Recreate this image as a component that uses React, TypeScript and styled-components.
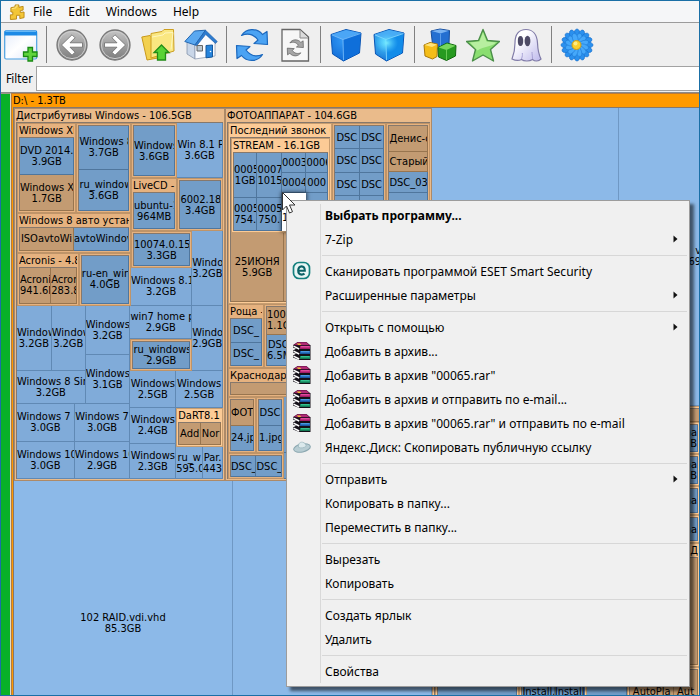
import React from "react";
import styled, { createGlobalStyle, css } from "styled-components";

const UI_FONT = '"Noto Sans", "Open Sans", sans-serif';
const MAP_FONT = '"DejaVu Sans Condensed", "Noto Sans", sans-serif';

const GlobalStyle = createGlobalStyle`
  *, *::before, *::after { box-sizing: border-box; }
  body { margin: 0; background: #efefef; color: #000; font-family: ${UI_FONT}; }
  button, input { font: inherit; color: inherit; }
`;

/* ---------- Window chrome ---------- */

const Window = styled.div`
  display: flex;
  flex-direction: column;
  height: 100vh;
  border: 1px solid #1a6fa6;
  overflow: hidden;
`;

const MenuBar = styled.nav`
  flex: none;
  display: flex;
  align-items: center;
  gap: 16px;
  height: 22px;
  padding-left: 8px;
  background: #f5f6f8;
  border-bottom: 1px solid #9b9b9b;
`;

const MenuBarIcon = styled.span`
  display: flex;
  margin-right: -8px;
`;

const MenuBarButton = styled.button`
  padding: 0;
  border: 0;
  background: none;
  font-size: 12px;
  line-height: 20px;
`;

const Toolbar = styled.div`
  flex: none;
  display: flex;
  align-items: center;
  gap: 9px;
  height: 43px;
  padding-left: 3px;
  background: #efefef;
  overflow: hidden;
`;

const ToolButton = styled.button`
  flex: none;
  display: flex;
  width: 34px;
  height: 34px;
  padding: 0;
  border: 0;
  background: none;
`;

const ToolSeparator = styled.span`
  flex: none;
  width: 1px;
  height: 37px;
  margin: 0 -1px;
  background: #808080;
`;

const FilterRow = styled.div`
  flex: none;
  display: flex;
  align-items: center;
  gap: 3px;
  height: 27px;
  padding-left: 5px;
  background: #efefef;
  border-bottom: 1px solid #8a8a8a;
`;

const FilterLabel = styled.label`
  font-family: ${MAP_FONT};
  font-size: 12px;
  line-height: 24px;
`;

const FilterInput = styled.input`
  flex: 1;
  min-width: 0;
  height: 25px;
  align-self: flex-start;
  padding: 0 4px;
  border: 1px solid #a2a2a2;
  border-right: 0;
  background: #fff;
  font-size: 12px;
  outline: none;
`;

/* ---------- Treemap ---------- */

type Tone = "sky" | "blue" | "steel" | "tan" | "picked";
type Shade = "root" | "outer" | "frame" | "pale";
type Dir = "row" | "column";

const tones: Record<Tone, [string, string]> = {
  sky: ["#8cb9e8", "#6f98c4"],
  blue: ["#80abd9", "#6089b4"],
  steel: ["#729dc8", "#4f769d"],
  tan: ["#c39b72", "#98754f"],
  picked: ["#ffffff", "#ffffff"],
};

const shades: Record<Shade, [string, string]> = {
  root: ["#ff9a00", "#b87a3c"],
  outer: ["#eabb8b", "#ad8a68"],
  frame: ["#e6b27f", "#bf9468"],
  pale: ["#fccb96", "#c79d70"],
};

type Node =
  | { kind: "split"; weight: number; dir: Dir; items: Node[] }
  | { kind: "leaf"; weight: number; name: string; size?: string; tone: Tone; edge?: boolean }
  | { kind: "folder"; weight: number; title?: string; shade: Shade; items: Node[]; edge?: boolean };

const row = (weight: number, ...items: Node[]): Node => ({ kind: "split", weight, dir: "row", items });
const col = (weight: number, ...items: Node[]): Node => ({ kind: "split", weight, dir: "column", items });
const leaf = (weight: number, name: string, size?: string, tone: Tone = "blue", edge = false): Node => ({
  kind: "leaf", weight, name, size, tone, edge,
});
const folder = (weight: number, title: string | undefined, shade: Shade, ...items: Node[]): Node => ({
  kind: "folder", weight, title, shade, items,
});

const tracks = (items: Node[]) => items.map((n) => `minmax(0, ${n.weight}fr)`).join(" ");

const Split = styled.div<{ $tracks: string; $dir: Dir }>`
  display: grid;
  min-width: 0;
  min-height: 0;
  ${(p) =>
    p.$dir === "row"
      ? css`grid-template: minmax(0, 1fr) / ${p.$tracks};`
      : css`grid-template: ${p.$tracks} / minmax(0, 1fr);`}
`;

const Tile = styled.div<{ $tone: Tone; $edge?: boolean }>`
  display: flex;
  flex-direction: column;
  justify-content: center;
  min-width: 0;
  min-height: 0;
  overflow: hidden;
  background: ${(p) => tones[p.$tone][0]};
  border: solid ${(p) => tones[p.$tone][1]};
  border-width: 0 1px 1px 0;
  text-align: ${(p) => (p.$edge ? "right" : "center")};
  ${(p) =>
    p.$tone === "picked" &&
    css`
      position: relative;
      padding-top: 12px;
      text-align: left;
      box-shadow: 0 0 4px 1px rgba(0, 0, 0, 0.6);
    `}
`;

const TileLine = styled.span`
  flex: none;
  white-space: nowrap;
  font-size: 11px;
  line-height: 11px;
`;

const FolderBox = styled.section<{ $shade: Shade }>`
  display: flex;
  flex-direction: column;
  min-width: 0;
  min-height: 0;
  padding: 0 1px 1px;
  background: ${(p) => shades[p.$shade][0]};
  border: 1px solid ${(p) => shades[p.$shade][1]};
`;

const FolderTitle = styled.header<{ $edge?: boolean }>`
  flex: none;
  height: 13px;
  overflow: hidden;
  white-space: nowrap;
  font-size: 11px;
  line-height: 13px;
  text-align: ${(p) => (p.$edge ? "right" : "left")};
`;

const FolderBody = styled(Split)<{ $untitled: boolean }>`
  flex: 1 1 0;
  margin-top: ${(p) => (p.$untitled ? "1px" : "0")};
  border: solid #86786c;
  border-width: 1px 0 0 1px;
`;

function MapNode({ node }: { node: Node }) {
  if (node.kind === "leaf") {
    return (
      <Tile $tone={node.tone} $edge={node.edge}>
        {node.name && <TileLine>{node.name}</TileLine>}
        {node.size && <TileLine>{node.size}</TileLine>}
      </Tile>
    );
  }
  const children = node.items.map((n, i) => <MapNode key={i} node={n} />);
  if (node.kind === "split") {
    return (
      <Split $tracks={tracks(node.items)} $dir={node.dir}>
        {children}
      </Split>
    );
  }
  return (
    <FolderBox $shade={node.shade}>
      {node.title && <FolderTitle $edge={node.edge}>{node.title}</FolderTitle>}
      <FolderBody $tracks={tracks(node.items)} $dir="row" $untitled={!node.title}>
        {children}
      </FolderBody>
    </FolderBox>
  );
}

const leafPair = (weight: number, top: [string, string], bottom: [string, string]): Node =>
  col(weight, leaf(46, ...top, "steel"), leaf(34, ...bottom, "steel"));

const distributions = folder(211, "Дистрибутивы Windows - 106.5GB", "outer",
  col(1,
    row(182,
      col(115,
        row(90,
          folder(60, "Windows XP", "frame",
            col(1, leaf(39, "DVD 2014.", "3.9GB", "steel"), leaf(37, "Windows XI", "1.7GB", "tan"))),
          folder(55, undefined, "frame",
            col(1, leaf(45, "Windows 8", "3.7GB", "steel"), leaf(42, "ru_window", "3.6GB", "steel")))),
        folder(40, "Windows 8 авто устано", "frame",
          leaf(56, "ISOavtoWi", undefined, "tan"), leaf(57, "avtoWindov", undefined, "steel")),
        row(53,
          folder(63, "Acronis - 4.80", "frame",
            leaf(33, "Acroni", "941.6M", "tan"), leaf(27, "Acron", "283.8", "tan")),
          folder(53, undefined, "frame", leaf(1, "ru-en_win", "4.0GB", "steel")))),
      col(93,
        row(55,
          folder(47, undefined, "frame", leaf(1, "Windows", "3.6GB", "steel")),
          leaf(46, "Win 8.1 P", "3.6GB")),
        row(53,
          folder(47, "LiveCD -", "frame", leaf(1, "ubuntu-1", "964MB", "steel")),
          folder(46, undefined, "frame", leaf(1, "6002.180", "3.4GB", "steel"))),
        row(74,
          col(62,
            folder(37, undefined, "frame", leaf(1, "10074.0.150", "3.3GB", "steel")),
            leaf(37, "Windows 8.1", "3.2GB")),
          leaf(31, "Windo", "3.2GB")))),
    row(173,
      col(114,
        row(98,
          col(69,
            row(65, leaf(35, "Window", "3.2GB"), leaf(34, "Window", "3.2GB")),
            leaf(33, "Windows 8 Sin", "3.2GB")),
          col(45, leaf(49, "Windows", "3.2GB"), leaf(49, "Windows", "3.1GB"))),
        row(38, leaf(58, "Windows 7 c", "3.0GB"), leaf(56, "Windows 7", "3.0GB")),
        row(37, leaf(58, "Windows 10", "3.0GB"), leaf(56, "Windows 10", "2.9GB"))),
      col(93,
        row(65,
          col(62,
            leaf(33, "win7 home p", "2.9GB"),
            folder(32, undefined, "frame", leaf(1, "ru_windows", "2.9GB", "steel"))),
          leaf(31, "Windo", "2.9GB")),
        row(37, leaf(46, "Windows", "2.5GB"), leaf(47, "Windows", "2.5GB")),
        row(71,
          col(46, leaf(36, "Windows", "2.4GB"), leaf(35, "Windows", "2.3GB")),
          col(47,
            folder(39, "DaRT8.1", "pale",
              leaf(22, "Add", undefined, "tan"), leaf(20, "Nor", undefined, "tan")),
            row(32, leaf(27, "ru_w", "595.0"), leaf(20, "Par.", "443"))))))));

const camera = folder(207, "ФОТОАППАРАТ - 104.6GB", "outer",
  row(1,
    col(105,
      folder(180, "Последний звонок 62", "pale",
        col(1,
          folder(95, "STREAM - 16.1GB", "pale",
            leafPair(24, ["0005", "1GB"], ["0005", "754."]),
            leafPair(25, ["0007", "1015"], ["0005", "750."]),
            col(25,
              leaf(21, "0003", undefined, "steel"),
              leaf(20, "0004", undefined, "steel"),
              leaf(39, "1", undefined, "picked")),
            col(22,
              leaf(21, "0006", undefined, "steel"),
              leaf(20, "000", undefined, "steel"),
              leaf(39, "", undefined, "steel"))),
          row(69, leaf(54, "25ИЮНЯ", "5.9GB", "tan"), leaf(46, "", undefined, "tan")))),
      row(64,
        folder(36, "Роща -", "frame",
          col(1, leaf(24, "DSC_", undefined, "steel"), leaf(23, "DSC_", undefined, "steel"))),
        folder(68, undefined, "frame",
          col(23, leaf(29, "100D", "1.1G", "tan"), leaf(31, "DSC", "6.5M", "steel")),
          leaf(38, "", undefined, "steel"))),
      folder(29, "Краснодар -", "frame", leaf(1, "", undefined, "tan")),
      row(56,
        folder(28, undefined, "frame",
          col(1, leaf(27, "ФОТ", undefined, "tan"), leaf(26, "24.jp", undefined, "steel"))),
        folder(28, undefined, "frame",
          col(1, leaf(27, "DSC", undefined, "steel"), leaf(26, "1.jpg", undefined, "steel"))),
        leaf(48, "", undefined, "steel")),
      row(26,
        folder(56, undefined, "frame",
          leaf(1, "DSC_", undefined, "steel"), leaf(1, "DSC_", undefined, "steel")),
        leaf(48, "", undefined, "steel"))),
    folder(55, undefined, "frame",
      ...[0, 1].map(() =>
        col(1, ...Array.from({ length: 15 }, (_, i) => leaf(1, i < 4 ? "DSC" : "", undefined, "steel"))))),
    folder(44, undefined, "frame",
      col(1,
        leaf(26, "Денис-с", undefined, "tan"),
        leaf(20, "Старый", undefined, "tan"),
        ...Array.from({ length: 14 }, (_, i) => leaf(22, i < 1 ? "DSC_03" : "", undefined, "steel"))))));

const programs = folder(359, undefined, "pale",
  col(1,
    row(135,
      leaf(234, "", undefined, "steel"),
      col(33,
        leaf(13, "", undefined, "tan"),
        folder(32, undefined, "pale", leaf(1, "ma", "GB", "steel", true)),
        folder(32, undefined, "pale", leaf(1, "ma", "GB", "steel", true)),
        folder(29, undefined, "pale", leaf(1, "ma", undefined, "steel", true)),
        folder(28, undefined, "pale", leaf(1, "ma", undefined, "steel", true)))),
    row(124,
      leaf(209, "", undefined, "steel"),
      { kind: "folder", weight: 58, title: "ЗД", shade: "pale", edge: true, items: [leaf(1, "", undefined, "tan")] }),
    row(50,
      folder(86, undefined, "pale", leaf(1, "", undefined, "steel")),
      folder(69, undefined, "pale",
        leaf(32, "Install.", undefined, "steel"), leaf(30, "Install", undefined, "steel")),
      leaf(41, "", undefined, "steel"),
      folder(74, undefined, "pale",
        leaf(44, "AutoPla", undefined, "tan"), leaf(24, "Aut", undefined, "tan"))),
    leaf(48, "", undefined, "steel")));

const drive = folder(1, "D:\\ - 1.3TB", "root",
  row(1,
    col(418,
      row(372, distributions, camera),
      row(284, leaf(219, "102 RAID.vdi.vhd", "85.3GB", "sky"), leaf(199, "", undefined, "sky"))),
    col(270,
      row(297, leaf(187, "", undefined, "sky"), leaf(83, "v", "69", "sky", true)),
      programs)));

const Main = styled.main`
  position: relative;
  flex: 1;
  display: flex;
  min-height: 0;
  overflow: hidden;
  font-family: ${MAP_FONT};
`;

const UsageBar = styled.div`
  flex: none;
  width: 10px;
  background: #08b127;
  border-right: 1px solid #dcdcc8;
  border-top: 1px solid #9a9a8a;
`;

/* The map is larger than its view: it runs on past the right and bottom edges. */
const MapCanvas = styled.div`
  flex: 1;
  display: grid;
  grid-template: minmax(0, 1fr) / minmax(0, 1fr);
  margin: 0 -5px -73px 0;
`;

/* ---------- Context menu ---------- */

const ContextMenu = styled.div`
  position: absolute;
  left: 285px;
  top: 107px;
  width: 404px;
  padding: 2px 2px 3px;
  background: linear-gradient(#d9d9d9, #d9d9d9) 33px 3px / 1px calc(100% - 6px) no-repeat #f0f0f0;
  border: 1px solid #9c9c9c;
  box-shadow: 4px 4px 3px rgba(0, 0, 0, 0.55);
  font-family: ${UI_FONT};
`;

const MenuItem = styled.button<{ $bold?: boolean }>`
  display: grid;
  grid-template-columns: 36px 1fr 14px;
  align-items: center;
  width: 100%;
  height: 24px;
  padding: 0;
  border: 0;
  background: none;
  text-align: left;
  white-space: nowrap;
  font-size: 12px;
  font-weight: ${(p) => (p.$bold ? 700 : 400)};
`;

const IconSlot = styled.span`
  display: flex;
  padding-left: 3px;
`;

const MenuSeparator = styled.hr`
  height: 1px;
  margin: 4px 0 3px 33px;
  border: 0;
  background: #d7d7d7;
`;

const Pointer = styled.svg`
  position: absolute;
  left: 280px;
  top: 98px;
  pointer-events: none;
`;

const Arrow = () => (
  <svg width="5" height="8" viewBox="0 0 5 8" aria-hidden="true">
    <path d="M0.5 0.5 4.5 4 0.5 7.5Z" fill="#111" />
  </svg>
);

const EsetIcon = () => (
  <svg width="20" height="20" viewBox="0 0 20 20">
    <rect x="1.500" y="1.500" width="16" height="16" rx="5.500" fill="#e8f6f4" stroke="#14807e" strokeWidth="1.700" />
    <path d="M6.500 9.700h6.300c0-2.800-1.100-4.300-3.200-4.300s-3.400 1.600-3.400 4.200c0 2.600 1.300 4 3.500 4 1.200 0 2-.3 2.800-.9" fill="none" stroke="#0b6266" strokeWidth="2.100" />
  </svg>
);

const books: [number, string, string][] = [
  [10, "#15865c", "#3ccf9c"],
  [5, "#1b5fb0", "#55a8ea"],
  [0, "#b01f70", "#ea56a6"],
];

const BooksIcon = () => (
  <svg width="20" height="20" viewBox="0 0 20 20">
    {books.map(([dy, dark, light]) => (
      <g key={dy} transform={`translate(0 ${dy})`}>
        <path d="M1 4.500 4.500 2.500 18.500 4V9H7.500L1 6.500Z" fill="#141018" />
        <path d="M8 5H18V7.900H8Z" fill={dark} />
        <path d="M9 5.200H17.500V6.300H9Z" fill={light} />
        <path d="M1.500 5.200 7.200 8" stroke="#fff" strokeWidth="1.500" />
      </g>
    ))}
    <path d="M1 4 5.500 1H14.500l4 3.500H7Z" fill="#5d1040" />
    <path d="M2.500 3.700 6 1.600H14.300l2.700 2.500H7.300Z" fill="#b02a74" />
    <path d="M4.500 2.500h3.500l1.300 1.400H6.300Z" fill="#f0c531" />
  </svg>
);

const SaucerIcon = () => (
  <svg width="20" height="20" viewBox="0 0 20 20">
    <ellipse cx="10" cy="11" rx="8.500" ry="4" transform="rotate(-12 10 11)" fill="#b8cdd3" stroke="#8ba7b0" />
    <path d="M6.500 10.300C6 6.500 8 4.800 10.500 5.200c2.400.4 3.500 2.300 3.700 4-2 1.700-5.200 2.200-7.700 1.100Z" fill="#dbe9ec" stroke="#9ab4bc" strokeWidth=".7" />
  </svg>
);

type Entry = { text: string; icon?: "eset" | "books" | "saucer"; sub?: boolean; bold?: boolean };

const groups: Entry[][] = [
  [{ text: "Выбрать программу...", bold: true }, { text: "7-Zip", sub: true }],
  [
    { text: "Сканировать программой ESET Smart Security", icon: "eset" },
    { text: "Расширенные параметры", sub: true },
  ],
  [
    { text: "Открыть с помощью", sub: true },
    { text: "Добавить в архив...", icon: "books" },
    { text: 'Добавить в архив "00065.rar"', icon: "books" },
    { text: "Добавить в архив и отправить по e-mail...", icon: "books" },
    { text: 'Добавить в архив "00065.rar" и отправить по e-mail', icon: "books" },
    { text: "Яндекс.Диск: Скопировать публичную ссылку", icon: "saucer" },
  ],
  [{ text: "Отправить", sub: true }, { text: "Копировать в папку..." }, { text: "Переместить в папку..." }],
  [{ text: "Вырезать" }, { text: "Копировать" }],
  [{ text: "Создать ярлык" }, { text: "Удалить" }],
  [{ text: "Свойства" }],
];

const menuIcons = { eset: EsetIcon, books: BooksIcon, saucer: SaucerIcon };

function FileMenu() {
  return (
    <ContextMenu role="menu">
      {groups.map((group, g) => (
        <React.Fragment key={g}>
          {g > 0 && <MenuSeparator />}
          {group.map((entry) => {
            const Icon = entry.icon && menuIcons[entry.icon];
            return (
              <MenuItem key={entry.text} role="menuitem" $bold={entry.bold}>
                <IconSlot>{Icon && <Icon />}</IconSlot>
                <span>{entry.text}</span>
                {entry.sub && <Arrow />}
              </MenuItem>
            );
          })}
        </React.Fragment>
      ))}
    </ContextMenu>
  );
}

/* ---------- Toolbar icons ---------- */

const Glyph = ({ children }: { children: React.ReactNode }) => (
  <svg width="34" height="34" viewBox="0 0 34 34" aria-hidden="true">
    {children}
  </svg>
);

const PuzzleIcon = () => (
  <svg width="16" height="18" viewBox="0 0 17 18" aria-hidden="true">
    <path d="M2 4.500 6.500 3.500V1.500h4V4L15 3v4l-3 .5v2l4-.5v6l-4.500 1v-3.500H8V16.500L1.500 17v-5H4V9H2Z" fill="#f3c637" stroke="#bd8a14" strokeLinejoin="round" />
    <path d="M3 5.500 7.500 4.500V2.500h2" stroke="#fdea8e" fill="none" />
  </svg>
);

const NewWindowIcon = () => (
  <Glyph>
    <defs>
      <linearGradient id="pane" x1="0" y1="0" x2="1" y2="1">
        <stop offset="0" stopColor="#e4ecfb" /><stop offset=".5" stopColor="#fff" /><stop offset="1" stopColor="#dfe6fa" />
      </linearGradient>
    </defs>
    <rect x=".7" y="3" width="32" height="28" rx="1.500" fill="url(#pane)" stroke="#4aa0e2" strokeWidth="1.200" />
    <path d="M.5 3.500Q.5 2.500 1.500 2.500h30.500q1 0 1 1V7.500H.5Z" fill="#1c8ae6" />
    <path d="M1.500 3.500h30.500" stroke="#66b8f5" />
    <path d="M24 19.500h4.500V24H33v4.500h-4.500V33H24v-4.500h-4.500V24H24Z" fill="#5fd43c" stroke="#198a14" strokeWidth="1.300" />
  </Glyph>
);

const ArrowDisc = ({ flip }: { flip?: boolean }) => (
  <Glyph>
    <defs>
      <linearGradient id="disc" x1="0" y1="0" x2="0" y2="1">
        <stop offset="0" stopColor="#c4c4c4" /><stop offset="1" stopColor="#7c7c7c" />
      </linearGradient>
    </defs>
    <circle cx="17" cy="17" r="15" fill="url(#disc)" stroke="#777" strokeWidth="1.300" />
    <circle cx="17" cy="17" r="13.600" fill="none" stroke="#cdcdcd" />
    <path
      d="M27.500 14.800v4.400H15l5 5-3 3L6.500 17 17 6.800l3 3-5 5Z"
      transform={flip ? "matrix(-1 0 0 1 34 0)" : undefined}
      fill="#fff" stroke="#6a6a6a" strokeWidth=".8"
    />
  </Glyph>
);

const FolderUpIcon = () => (
  <Glyph>
    <path d="M.8 9 9 7.500 10.500 9l12-2L22 29 6 32Z" fill="#f2d04f" stroke="#c8981b" />
    <path d="M10 5.500 21 3.500l2-2h9.500L33 23 10 30Z" fill="#fae781" stroke="#cc9e20" />
    <path d="M11 9 22 7l2-2 8-.5-2 17" fill="none" stroke="#fff6bd" />
    <path d="M20.500 17 28 24.500h-3.500V32h-8v-7.500H13Z" fill="#58d334" stroke="#218c17" strokeWidth="1.300" />
  </Glyph>
);

const HomeIcon = () => (
  <Glyph>
    <path d="M3 13 11 16V31L3 26Z" fill="#c9d6e8" stroke="#8795ab" strokeWidth=".8" />
    <path d="M11 16.500 21.500 5 31 14.500V28L11 31Z" fill="#fbfcff" stroke="#8f9db3" strokeWidth=".8" />
    <path d="M.8 13.500 10.500 3 21.500 2.200 11 17Z" fill="#5aa8f0" stroke="#2467b0" />
    <path d="M21.500 2.200 33.300 13.500 31.500 15.500 21.700 6.500 12.500 18 11 17Z" fill="#2d7cd0" stroke="#1f5da4" strokeWidth=".6" />
    <path d="M13 17.500h5.500V23H13Z" fill="#b9c6d0" stroke="#666" />
    <path d="M22 17.500 28.500 17v12L22 29.800Z" fill="#2684dc" stroke="#15599e" />
    <circle cx="26.500" cy="23.500" r=".8" fill="#fff" />
  </Glyph>
);

const RefreshPaths = ({ fill, stroke }: { fill: string; stroke: string }) => (
  <g fill={fill} stroke={stroke} strokeWidth="1.200" strokeLinejoin="round">
    <path d="M6.500 7.500C11 0 22 -.5 27.500 6.500L32 3.500 32.500 16.500 19 15.500 23 12C18.500 6 12.500 5 6.500 7.500Z" />
    <path d="M27.500 26.500C23 34 12 34.500 6.500 27.500L2 30.500 1.500 17.500 15 18.500 11 22C15.500 28 21.500 29 27.500 26.500Z" />
  </g>
);

const RefreshIcon = () => <Glyph><RefreshPaths fill="#4ba3f3" stroke="#1c68bd" /></Glyph>;

const RefreshDocIcon = () => (
  <Glyph>
    <path d="M4 1.500h18L30.500 9v24H4Z" fill="#f7f7f7" stroke="#666" strokeWidth="1.300" />
    <path d="M22 2v8h8" fill="#dcdcdc" stroke="#8a8a8a" />
    <g transform="translate(8.500 11) scale(.52)"><RefreshPaths fill="#a5a5a5" stroke="#505050" /></g>
  </Glyph>
);

const CubeIcon = ({ bright }: { bright?: boolean }) => {
  const id = bright ? "cubeBright" : "cubePlain";
  return (
    <Glyph>
      <defs>
        <radialGradient id={id} cx=".4" cy=".35" r=".8">
          <stop offset="0" stopColor={bright ? "#52d2ff" : "#3298f5"} /><stop offset="1" stopColor="#0a62cf" />
        </radialGradient>
        <radialGradient id={`${id}Glow`}>
          <stop offset="0" stopColor="#7df0ff" stopOpacity=".9" /><stop offset="1" stopColor="#4cc8ff" stopOpacity="0" />
        </radialGradient>
      </defs>
      <path d="M2 6.500 17 1.500 32 5l-1.500 20L14.500 33 3.500 26Z" fill={`url(#${id})`} stroke="#0a56b5" strokeLinejoin="round" />
      <path d="M2.500 6.500 17 2l14.500 3L14 11.500Z" fill={bright ? "#48acf5" : "#4ba6f6"} />
      <path d="M14 11.500 31.500 5.500 30 25l-15.500 7.500Z" fill={bright ? "#128ce9" : "#0f6fda"} />
      <path d="M3 7 14 11.500 31.500 5.500M14 11.500 14.500 32" fill="none" stroke={bright ? "#8fdcff" : "#7fc2fb"} strokeWidth=".8" />
      {bright && <ellipse cx="15" cy="15" rx="11" ry="10" fill={`url(#${id}Glow)`} />}
    </Glyph>
  );
};

const BlocksIcon = () => (
  <Glyph>
    <path d="M8 3 17 1l9.500 1.500L26 16l-8.500 3-8-3Z" fill="#246fd1" stroke="#164d9c" />
    <path d="M8.500 3 17 1.500l9 1.300L17.500 5.500Z" fill="#7ab3f2" />
    <path d="M17.500 6v12" stroke="#5a9ce9" />
    <path d="M1 17 7 14.500l7.500 1.500L14 28.500 9.500 31 2 28Z" fill="#f4bd18" stroke="#aa790b" />
    <path d="m1.500 17 6-2 6.500 1.500-5 2.500Z" fill="#ffe479" />
    <path d="M15 19.500 24 15l9 2.500L32.500 28 23.500 32.500 15.500 29Z" fill="#279a20" stroke="#11680e" />
    <path d="m15.500 19.500 8.500-4 8.500 2.300L23.500 22Z" fill="#76d65c" />
    <path d="M23.500 22v10" stroke="#6ac957" />
  </Glyph>
);

const StarIcon = () => (
  <Glyph>
    <path d="m17 1.500 4.500 11 12 1-9 8 3 11.500L17 27 6.500 33l3-11.500-9-8 12-1Z" fill="#8ade70" stroke="#4b8f49" strokeWidth="1.400" strokeLinejoin="round" />
    <path d="m17 4.500 3.500 9 9.500 1c-4 4.500-12 3.500-18.500 8L4 14.500l9.500-1Z" fill="#b7efa0" />
  </Glyph>
);

const GhostIcon = () => (
  <Glyph>
    <defs>
      <linearGradient id="ghost" x1="0" y1="0" x2="1" y2="1">
        <stop offset=".3" stopColor="#fff" /><stop offset="1" stopColor="#bdb8ec" />
      </linearGradient>
    </defs>
    <path d="M6 15C6 6 10 1.500 17 1.500S28 7 28.500 15c.3 7 1.500 12 3.500 16-2.500 2.500-6 2.500-8.500.5-3 2-8.500 2-11 0-3 1.500-6.500 1-9.500-.5 2-5 3-9 3-16Z" fill="url(#ghost)" stroke="#817ca8" strokeWidth="1.200" />
    <ellipse cx="11.500" cy="13" rx="2.700" ry="5" fill="#4d4a66" />
    <ellipse cx="18.500" cy="13" rx="2.900" ry="5.300" fill="#4d4a66" />
    <path d="M12.500 31c1-3 1-4 .8-6M23.500 31c0-3-.5-5-.5-7" stroke="#a7a1d6" fill="none" />
  </Glyph>
);

const FlowerIcon = () => (
  <Glyph>
    {Array.from({ length: 16 }, (_, i) => (
      <ellipse
        key={i} cx="17" cy="6.500" rx="3" ry="5.500" transform={`rotate(${i * 22.5} 17 17)`}
        fill="#2a90ee" stroke="#1a73d0" strokeWidth=".7"
      />
    ))}
    {Array.from({ length: 12 }, (_, i) => (
      <ellipse
        key={i} cx="17" cy="10" rx="2.700" ry="5" transform={`rotate(${i * 30 + 15} 17 17)`}
        fill="#45a8fa" stroke="#1f7bd8" strokeWidth=".6"
      />
    ))}
    <circle cx="16.500" cy="17" r="4.500" fill="#fbd02c" stroke="#cb9c1b" />
    <circle cx="15.500" cy="15.500" r="2" fill="#ffec83" />
  </Glyph>
);

const tools: [string, React.ReactNode][][] = [
  [["New view", <NewWindowIcon />]],
  [["Back", <ArrowDisc />], ["Forward", <ArrowDisc flip />], ["Up one folder", <FolderUpIcon />], ["Home", <HomeIcon />]],
  [["Rescan", <RefreshIcon />], ["Refresh folder", <RefreshDocIcon />]],
  [["Less detail", <CubeIcon />], ["More detail", <CubeIcon bright />]],
  [["Show blocks", <BlocksIcon />], ["Free space", <StarIcon />], ["Unknown space", <GhostIcon />]],
  [["Settings", <FlowerIcon />]],
];

export default function App() {
  return (
    <Window>
      <GlobalStyle />
      <MenuBar>
        <MenuBarIcon><PuzzleIcon /></MenuBarIcon>
        {["File", "Edit", "Windows", "Help"].map((name) => (
          <MenuBarButton key={name}>{name}</MenuBarButton>
        ))}
      </MenuBar>
      <Toolbar>
        {tools.map((group, g) => (
          <React.Fragment key={g}>
            {g > 0 && <ToolSeparator />}
            {group.map(([name, icon]) => (
              <ToolButton key={name} aria-label={name}>{icon}</ToolButton>
            ))}
          </React.Fragment>
        ))}
      </Toolbar>
      <FilterRow>
        <FilterLabel htmlFor="filter">Filter</FilterLabel>
        <FilterInput id="filter" type="text" />
      </FilterRow>
      <Main>
        <UsageBar />
        <MapCanvas>
          <MapNode node={drive} />
        </MapCanvas>
        <FileMenu />
        <Pointer width="16" height="24" viewBox="0 0 16 24">
          <path d="M1.500 1.500v17.500l4-4 3 7 3-1.300-3-6.700h5.500Z" fill="#fff" stroke="#333" />
        </Pointer>
      </Main>
    </Window>
  );
}
